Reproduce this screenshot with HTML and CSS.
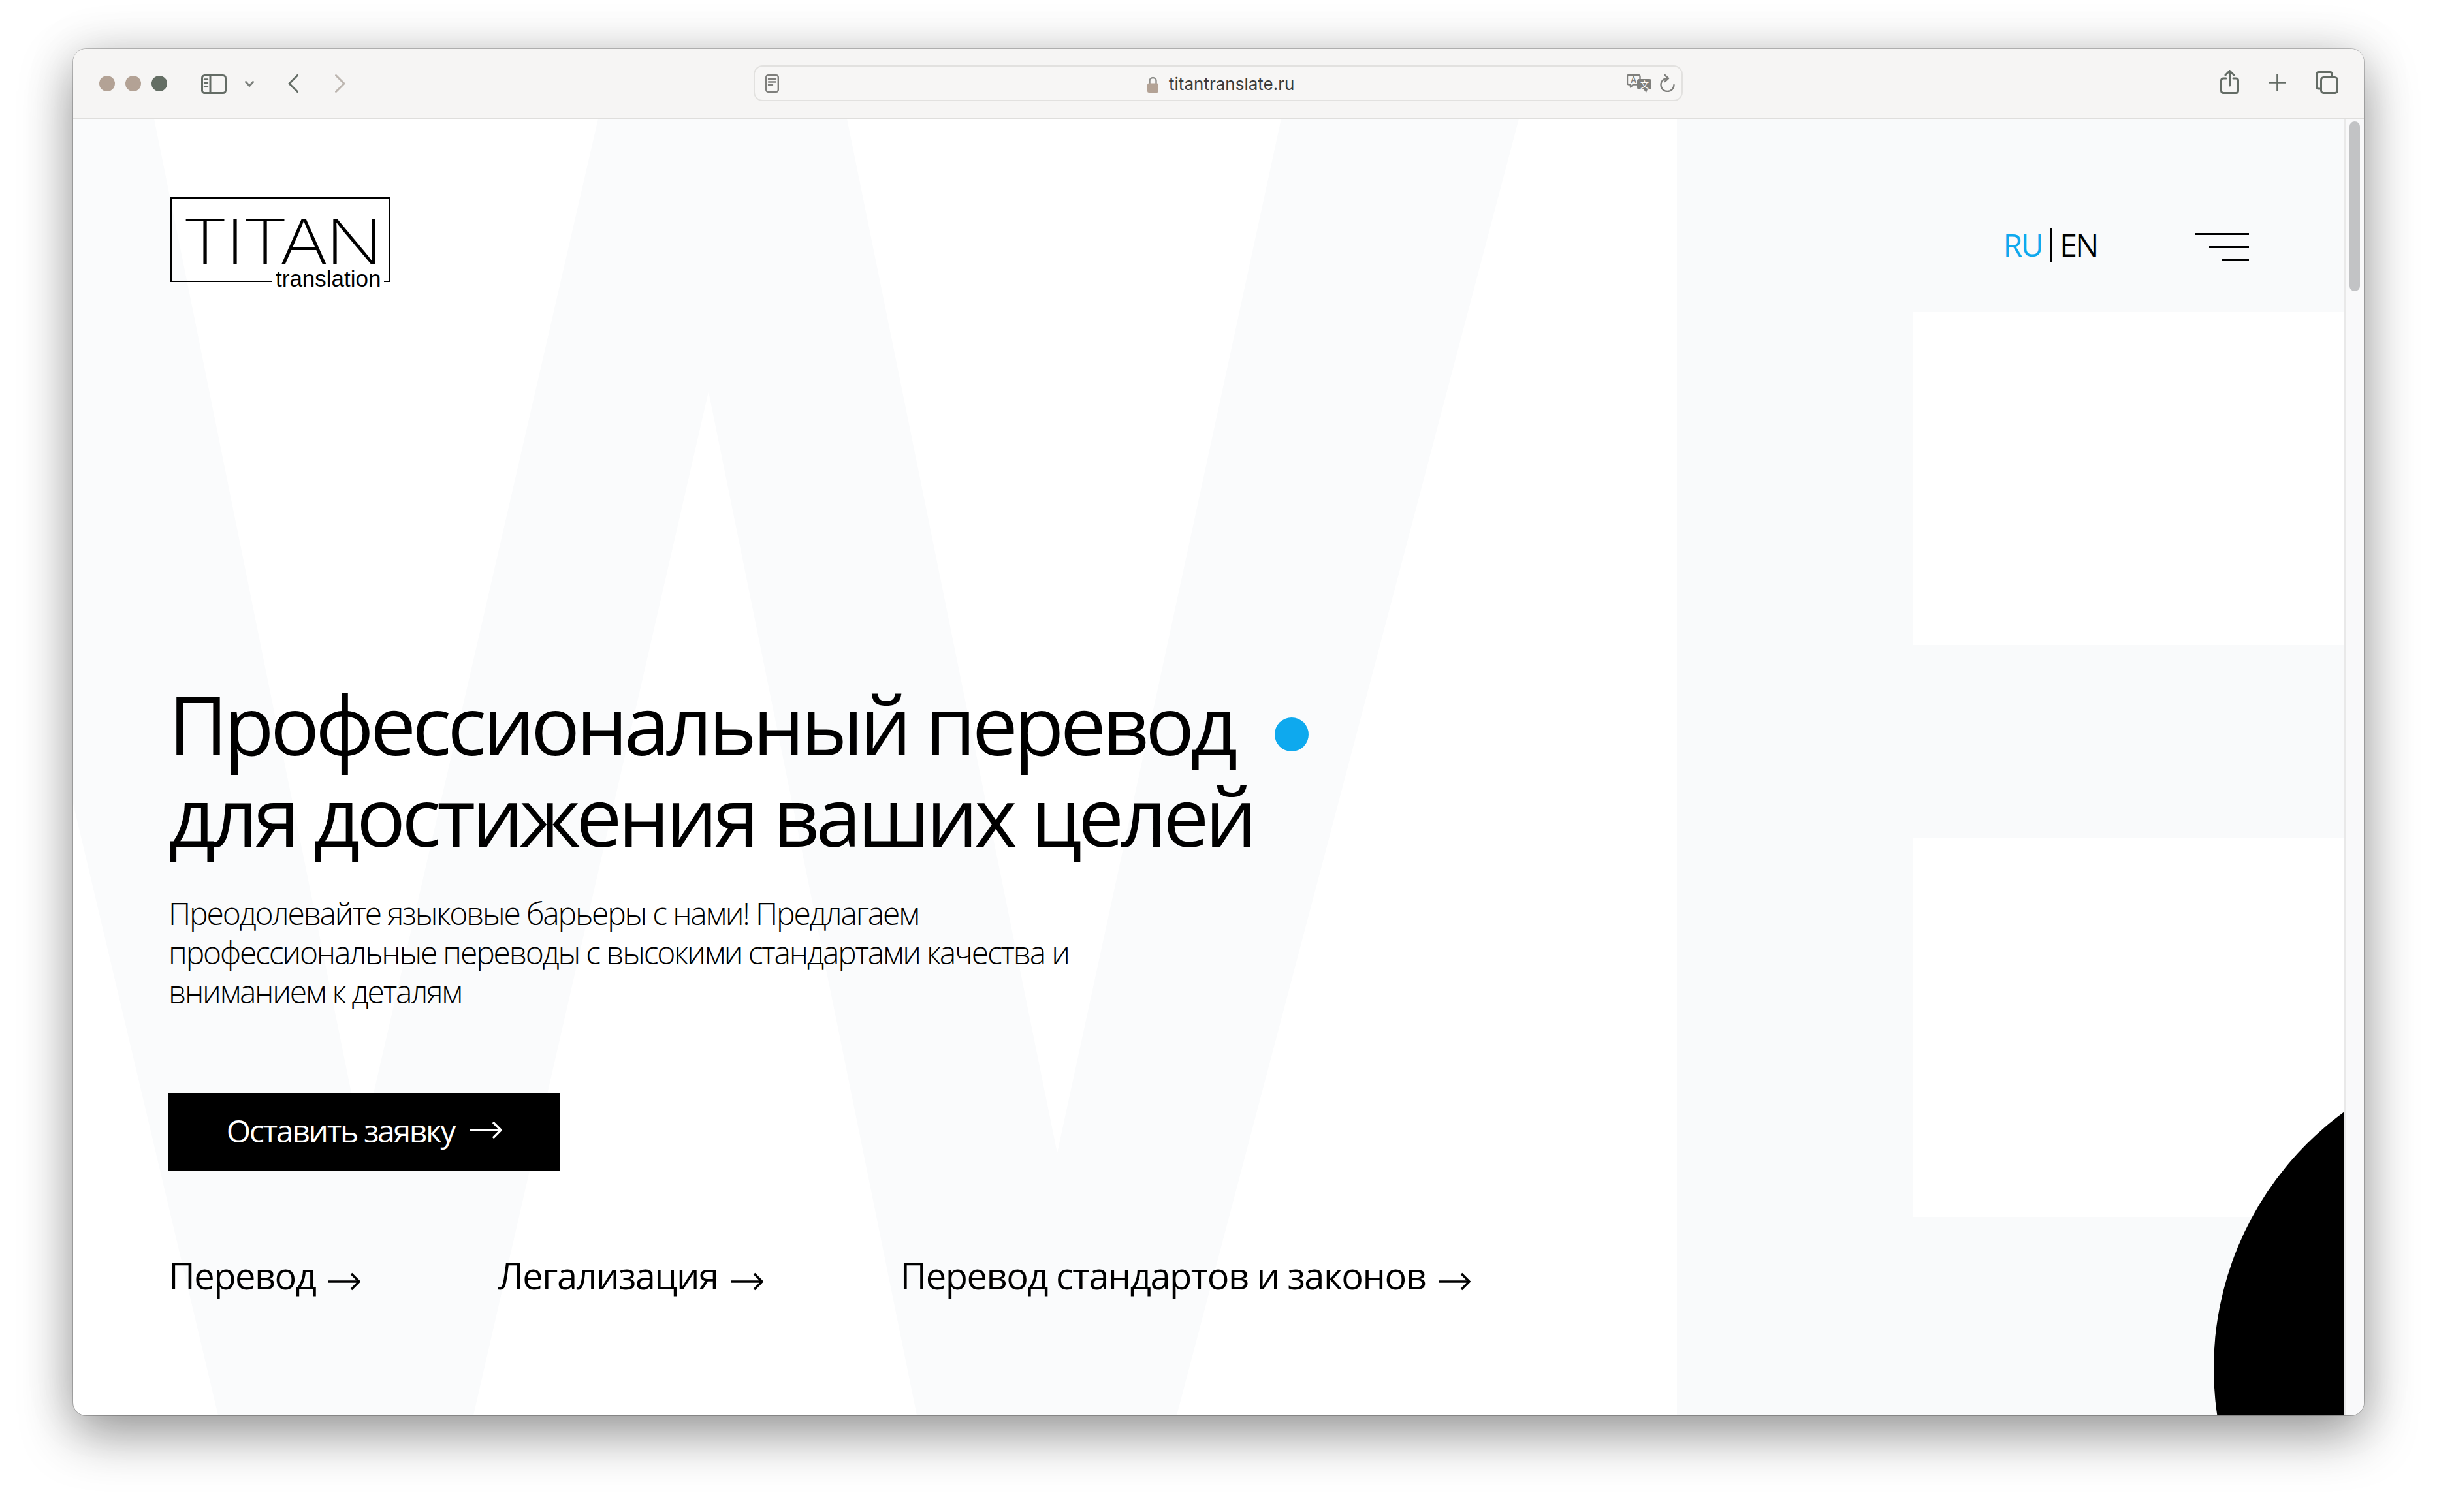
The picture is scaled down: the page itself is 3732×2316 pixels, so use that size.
FILE: index.html
```html
<!DOCTYPE html>
<html lang="ru">
<head>
  <meta charset="UTF-8">
  <title>Titan Translation</title>
  <link rel="stylesheet" href="styles.css">
</head>
<body>
  <div class="window">
    <div class="toolbar">
      <div class="toolbar-left">
        <span class="light"></span>
        <span class="light"></span>
        <span class="light light-green"></span>
        <svg class="ico ico-sidebar" width="39" height="30" viewBox="0 0 39 30"><rect x="1.5" y="1.5" width="36" height="27" rx="4"/><path d="M14 2V28"/><path class="thin" d="M5 7.5H10M5 13H10M5 18.5H10"/></svg>
        <span class="sep"></span>
        <svg class="ico ico-down" width="14" height="9" viewBox="0 0 14 9"><path d="M1.5 1.5L7 7.5L12.5 1.5"/></svg>
        <svg class="ico ico-back" width="16" height="28" viewBox="0 0 16 28"><path d="M14.5 1.5L2 14L14.5 26.5"/></svg>
        <svg class="ico ico-fwd" width="16" height="28" viewBox="0 0 16 28"><path d="M1.5 1.5L14 14L1.5 26.5"/></svg>
      </div>
      <div class="urlbar">
        <svg class="ico ico-doc" width="21" height="28" viewBox="0 0 21 28"><rect x="1.2" y="1.2" width="18.6" height="25.6" rx="3"/><path class="thin" d="M5 7H16M5 11.5H16M5 16H11"/></svg>
        <div class="url">
          <svg class="lock" width="17" height="25" viewBox="0 0 17 25"><path class="shackle" d="M3.5 12V7a5 5 0 0 1 10 0V12"/><rect y="10.5" width="17" height="14.5" rx="2.5"/></svg>
          <span>titantranslate.ru</span>
        </div>
        <svg class="ico ico-trans" width="38" height="28" viewBox="0 0 38 28">
          <path class="thin" d="M3 1H18Q20.500 1 20.500 3.500V13Q20.500 15.500 18 15.500H10L6 19.500V15.500H3Q1 15.500 1 13V3.500Q1 1 3 1Z"/>
          <text class="tr-a" x="6" y="13">A</text>
          <path class="tr-fill" d="M19 7H35Q38 7 38 10V20Q38 23 35 23H32L30 28L26 23H19Q16 23 16 20V10Q16 7 19 7Z"/>
          <text class="tr-b" x="21" y="20">文</text>
        </svg>
        <svg class="ico ico-reload" width="24" height="27" viewBox="0 0 24 27"><path class="thin" d="M12.500 6A10 10 0 1 0 22.500 16"/><path class="thin" d="M8.500 1L14 6L8.500 11"/></svg>
      </div>
      <div class="toolbar-right">
        <svg class="ico ico-share" width="29" height="37" viewBox="0 0 29 37"><path d="M9 13H5Q1.500 13 1.500 16.500V32Q1.500 35.500 5 35.500H24Q27.500 35.500 27.500 32V16.500Q27.500 13 24 13H20"/><path d="M14.500 24V2M8 8L14.500 1.500L21 8"/></svg>
        <svg class="ico ico-plus" width="27" height="27" viewBox="0 0 27 27"><path d="M13.500 0V27M0 13.500H27"/></svg>
        <svg class="ico ico-tabs" width="35" height="35" viewBox="0 0 35 35"><path d="M7 27H5Q1.500 27 1.500 23.500V5Q1.500 1.500 5 1.500H22Q25.500 1.500 25.500 5V8"/><rect x="8.500" y="9.500" width="25" height="24" rx="4"/></svg>
      </div>
    </div>

    <div class="content">
      <div class="main">
        <svg class="bg-letters" width="3478" height="1986" viewBox="0 0 3478 1986">
          <polygon class="letter-w" points="0,0 124,0 442,1571 804,0 1185,0 1507,1584 1850,0 2214,0 1690,1986 1292,1986 973,418 613,1986 222,1986 0,1049"/>
          <path d="M2456 0H3478V296H2818V806H3478V1101H2818V1682H3478V1986H2456Z"/>
        </svg>
        <div class="circle"></div>

        <header class="header">
          <div class="logo">
            <span class="logo-name">TITAN</span>
            <span class="logo-sub">translation</span>
          </div>
          <div class="header-right">
            <div class="lang"><span class="lang-on">RU</span><span class="lang-sep"></span><span>EN</span></div>
            <div class="burger"><span></span><span></span><span></span></div>
          </div>
        </header>

        <section class="hero">
          <h1>Профессиональный перевод<span class="dot"></span><br>для достижения ваших целей</h1>
          <p>Преодолевайте языковые барьеры с нами! Предлагаем<br>профессиональные переводы с высокими стандартами качества и<br>вниманием к деталям</p>
          <a class="btn" href="#">Оставить заявку
            <svg class="arrow" width="49" height="28" viewBox="0 0 49 28"><path d="M0 14H47M35 2L47 14L35 26"/></svg>
          </a>
          <div class="links">
            <a href="#">Перевод <svg class="arrow" width="49" height="28" viewBox="0 0 49 28"><path d="M0 14H47M35 2L47 14L35 26"/></svg></a>
            <a href="#">Легализация <svg class="arrow" width="49" height="28" viewBox="0 0 49 28"><path d="M0 14H47M35 2L47 14L35 26"/></svg></a>
            <a href="#">Перевод стандартов и законов <svg class="arrow" width="49" height="28" viewBox="0 0 49 28"><path d="M0 14H47M35 2L47 14L35 26"/></svg></a>
          </div>
        </section>
      </div>
      <div class="scrollbar"><div class="thumb"></div></div>
    </div>
  </div>
</body>
</html>
```

FILE: styles.css
```css
html, body {
  margin: 0;
  background: #fff;
}
body {
  width: 3732px;
  height: 2316px;
  padding: 75px 112px 0;
  box-sizing: border-box;
  overflow: hidden;
  font-family: "Open Sans", "Noto Sans", sans-serif;
  color: #000;
}
.window {
  width: 3508px;
  height: 2093px;
  border-radius: 20px;
  overflow: hidden;
  display: flex;
  flex-direction: column;
  background: #fff;
  box-shadow: 0 0 0 1px rgba(0,0,0,0.22), 0 30px 80px rgba(0,0,0,0.38), 0 0 80px rgba(0,0,0,0.1);
}

/* safari toolbar */
.toolbar {
  height: 107px;
  flex: none;
  box-sizing: border-box;
  border-bottom: 2px solid #dfdedc;
  background: #f6f5f4;
  position: relative;
  display: flex;
  align-items: flex-start;
}
.toolbar-left {
  display: flex;
  align-items: center;
  height: 28px;
  margin-top: 39px;
  padding-left: 40px;
}
.light {
  width: 24px;
  height: 24px;
  border-radius: 50%;
  background: #b3a295;
  margin-right: 16px;
}
.light-green {
  background: #646e64;
  margin-right: 0;
}
.ico {
  fill: none;
  stroke: #646c65;
  stroke-width: 3;
  stroke-linecap: round;
  stroke-linejoin: round;
  flex: none;
}
.ico .thin { stroke-width: 2.4; }
.ico-sidebar { margin-left: 52px; margin-top: 2px; }
.sep {
  width: 1px;
  height: 36px;
  background: #e6e5e3;
  margin-left: 14px;
}
.ico-down { margin-left: 13px; stroke: #7c807c; }
.ico-back { margin-left: 52px; }
.ico-fwd { margin-left: 56px; stroke: #bdb6b0; }

.urlbar {
  position: absolute;
  left: 1042px;
  top: 25px;
  width: 1423px;
  height: 55px;
  box-sizing: border-box;
  border: 2px solid #e2e1df;
  border-radius: 14px;
  background: #f7f6f5;
  display: flex;
  align-items: center;
  padding-left: 16px;
}
.ico-doc { stroke: #7f7f7c; stroke-width: 2.4; }
.url {
  position: absolute;
  left: 601px;
  top: 14px;
  display: flex;
  align-items: center;
  gap: 16px;
  font-family: Inter, sans-serif;
  font-size: 26px;
  line-height: 26px;
  color: #3c3c3c;
}
.lock { fill: #b3a295; flex: none; }
.lock .shackle { fill: none; stroke: #8f8f8b; stroke-width: 2.4; }
.ico-trans { margin-left: auto; stroke: #7f7f7c; }
.tr-a {
  font-family: Inter, sans-serif;
  font-size: 13px;
  font-weight: 500;
  fill: #7f7f7c;
  stroke: none;
}
.tr-fill { fill: #7f7f7c; stroke: none; }
.tr-b {
  font-family: "Noto Sans CJK SC", sans-serif;
  font-size: 13px;
  fill: #fff;
  stroke: none;
}
.ico-reload { margin-left: 12px; margin-right: 10px; stroke: #7f7f7c; }

.toolbar-right { position: absolute; left: 3288px; top: 32px; display: flex; align-items: flex-start; }
.ico-plus { margin-left: 45px; margin-top: 6px; stroke-width: 2.600; }
.ico-tabs { margin-left: 45px; margin-top: 2px; }

/* page */
.content {
  flex: 1;
  display: flex;
  min-height: 0;
}
.main {
  flex: 1;
  position: relative;
  overflow: hidden;
  box-sizing: border-box;
  padding: 120px 146px 0;
}
.bg-letters {
  position: absolute;
  left: 0;
  top: 0;
  fill: #f9fafb;
}
.letter-w { fill: #fafbfc; }
.circle {
  position: absolute;
  left: 3278px;
  top: 1428px;
  width: 972px;
  height: 972px;
  border-radius: 50%;
  background: #000;
}
.scrollbar {
  width: 30px;
  flex: none;
  box-sizing: border-box;
  border-left: 2px solid #e9e9e9;
  background: #f9f9fa;
  padding: 4px 0 0 6px;
}
.thumb {
  width: 16px;
  height: 260px;
  border-radius: 8px;
  background: #c2c3c5;
}

.header {
  position: relative;
  display: flex;
  justify-content: space-between;
  align-items: flex-start;
}
.logo {
  position: relative;
  width: 336px;
  height: 130px;
  margin-left: 3px;
  box-sizing: border-box;
  border: 2px solid #000;
  border-top-width: 3px;
}
.logo-name {
  position: absolute;
  left: 15px;
  top: 27px;
  font-family: Inter, sans-serif;
  font-weight: 200;
  font-size: 96px;
  line-height: 76px;
  letter-spacing: -4px;
  transform: scaleX(1.2);
  transform-origin: left;
}
.logo-sub {
  position: absolute;
  left: 154px;
  top: 102px;
  padding: 0 5px;
  background: #fff;
  font-family: "Liberation Sans", sans-serif;
  font-size: 35px;
  line-height: 40px;
}
.header-right {
  display: flex;
  align-items: flex-start;
  margin-top: 47px;
}
.lang {
  display: flex;
  align-items: center;
  font-size: 48px;
  line-height: 50px;
  letter-spacing: -2.500px;
}
.lang-on { color: #0ea9ee; }
.lang-sep {
  width: 4px;
  height: 52px;
  background: #000;
  margin: 0 11px 0 12px;
}
.burger {
  width: 82px;
  margin-left: 150px;
  margin-top: 8px;
  display: flex;
  flex-direction: column;
  align-items: flex-end;
  gap: 17px;
}
.burger span {
  height: 3px;
  width: 82px;
  background: #000;
}
.burger span:nth-child(2) { width: 61px; }
.burger span:nth-child(3) { width: 41px; }

.hero {
  position: relative;
  margin-top: 607px;
}
h1 {
  margin: 0;
  font-weight: 500;
  font-size: 125px;
  line-height: 140px;
  letter-spacing: -5.800px;
}
.dot {
  display: inline-block;
  width: 52px;
  height: 52px;
  border-radius: 50%;
  background: #0ea9ee;
  margin-left: 62px;
  vertical-align: 6px;
}
.hero p {
  margin: 50px 0 0;
  font-weight: 300;
  font-size: 48px;
  line-height: 60px;
  letter-spacing: -2.200px;
}
.btn {
  margin-top: 125px;
  width: 600px;
  height: 120px;
  box-sizing: border-box;
  padding-bottom: 6px;
  display: flex;
  align-items: center;
  justify-content: center;
  gap: 24px;
  background: #000;
  color: #fff;
  text-decoration: none;
  font-size: 48px;
  letter-spacing: -2.300px;
}
.arrow {
  fill: none;
  stroke: currentColor;
  stroke-width: 3.500;
  flex: none;
}
.links {
  display: flex;
  gap: 210px;
  margin-top: 121px;
  font-size: 56px;
  line-height: 76px;
  letter-spacing: -1.500px;
}
.links a {
  color: #000;
  text-decoration: none;
  white-space: nowrap;
  display: flex;
  align-items: center;
  gap: 20px;
}
.links .arrow { margin-top: 20px; }
```
